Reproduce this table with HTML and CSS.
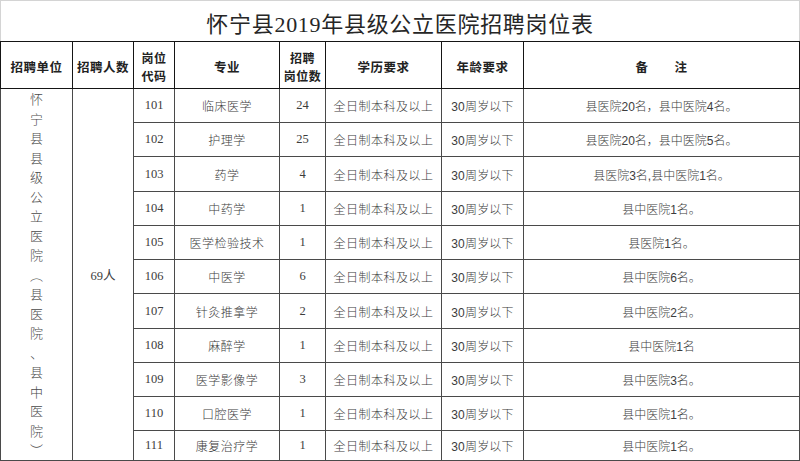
FILE: index.html
```html
<!DOCTYPE html>
<html lang="zh-CN">
<head>
<meta charset="utf-8">
<title>怀宁县2019年县级公立医院招聘岗位表</title>
<link rel="stylesheet" href="styles.css">
</head>
<body>
<div class="sheet">
  <div class="title">怀宁县2019年县级公立医院招聘岗位表</div>
  <table class="grid">
    <colgroup>
      <col class="c-unit"><col class="c-count"><col class="c-code"><col class="c-major"><col class="c-posts"><col class="c-edu"><col class="c-age"><col class="c-note">
    </colgroup>
    <thead>
      <tr class="head">
        <th>招聘单位</th><th>招聘人数</th><th class="two"><span>岗位</span><span>代码</span></th><th>专业</th><th class="two"><span>招聘</span><span>岗位数</span></th><th>学历要求</th><th>年龄要求</th><th>备&emsp;&emsp;注</th>
      </tr>
    </thead>
    <tbody>
      <tr class="row">
        <td rowspan="11" class="unit"><div class="vert">怀宁县县级公立医院︵县医院、县中医院︶</div></td>
        <td rowspan="11" class="count">69人</td>
        <td class="num">101</td><td class="cn">临床医学</td><td class="num">24</td><td class="cn">全日制本科及以上</td><td class="age">30周岁以下</td><td class="note">县医院20名，县中医院4名。</td>
      </tr>
      <tr class="row"><td class="num">102</td><td class="cn">护理学</td><td class="num">25</td><td class="cn">全日制本科及以上</td><td class="age">30周岁以下</td><td class="note">县医院20名，县中医院5名。</td></tr>
      <tr class="row"><td class="num">103</td><td class="cn">药学</td><td class="num">4</td><td class="cn">全日制本科及以上</td><td class="age">30周岁以下</td><td class="note">县医院3名,县中医院1名。</td></tr>
      <tr class="row"><td class="num">104</td><td class="cn">中药学</td><td class="num">1</td><td class="cn">全日制本科及以上</td><td class="age">30周岁以下</td><td class="note">县中医院1名。</td></tr>
      <tr class="row"><td class="num">105</td><td class="cn">医学检验技术</td><td class="num">1</td><td class="cn">全日制本科及以上</td><td class="age">30周岁以下</td><td class="note">县医院1名。</td></tr>
      <tr class="row"><td class="num">106</td><td class="cn">中医学</td><td class="num">6</td><td class="cn">全日制本科及以上</td><td class="age">30周岁以下</td><td class="note">县中医院6名。</td></tr>
      <tr class="row"><td class="num">107</td><td class="cn">针灸推拿学</td><td class="num">2</td><td class="cn">全日制本科及以上</td><td class="age">30周岁以下</td><td class="note">县中医院2名。</td></tr>
      <tr class="row"><td class="num">108</td><td class="cn">麻醉学</td><td class="num">1</td><td class="cn">全日制本科及以上</td><td class="age">30周岁以下</td><td class="note">县中医院1名</td></tr>
      <tr class="row"><td class="num">109</td><td class="cn">医学影像学</td><td class="num">3</td><td class="cn">全日制本科及以上</td><td class="age">30周岁以下</td><td class="note">县中医院3名。</td></tr>
      <tr class="row"><td class="num">110</td><td class="cn">口腔医学</td><td class="num">1</td><td class="cn">全日制本科及以上</td><td class="age">30周岁以下</td><td class="note">县中医院1名。</td></tr>
      <tr class="row last"><td class="num">111</td><td class="cn">康复治疗学</td><td class="num">1</td><td class="cn">全日制本科及以上</td><td class="age">30周岁以下</td><td class="note">县中医院1名。</td></tr>
    </tbody>
  </table>
</div>
</body>
</html>
```

FILE: styles.css
```css
html, body {
  margin: 0;
  padding: 0;
  background: #ffffff;
}

.sheet {
  width: 800px;
  height: 461px;
  overflow: hidden;
  font-family: "Liberation Serif", "Noto Sans CJK SC", serif;
  color: #333;
}

.title {
  box-sizing: border-box;
  height: 41px;
  border: 1px solid #d4d4d4;
  border-bottom: none;
  display: flex;
  align-items: center;
  justify-content: center;
  font-size: 22px;
  letter-spacing: 0.7px;
  color: #262626;
  padding-top: 1px;
}

.grid {
  border-collapse: collapse;
  table-layout: fixed;
  width: 799px;
}

.c-unit { width: 72px; }
.c-count { width: 61px; }
.c-code { width: 41px; }
.c-major { width: 105px; }
.c-posts { width: 46px; }
.c-edu { width: 116px; }
.c-age { width: 82px; }
.c-note { width: 276px; }

.grid th,
.grid td {
  border: 1px solid #3a3a3a;
  padding: 0;
  text-align: center;
  vertical-align: middle;
}

.head {
  height: 47px;
}

.head th {
  border-color: #151515;
  font-family: "Noto Sans CJK SC", sans-serif;
  font-weight: 700;
  font-size: 12.5px;
  line-height: 15px;
  color: #222;
  letter-spacing: 0.5px;
  padding-top: 2px;
}

.head th.two {
  font-size: 12px;
  padding-top: 3px;
}

.two span {
  display: block;
  height: 17.5px;
  line-height: 17.5px;
}

.row {
  height: 34.2px;
}

.row.last {
  height: 29px;
}

.row td {
  border-color: #4a4a4a;
  color: #3c3c3c;
}

.unit,
.count {
  border-color: #2a2a2a;
}

.vert {
  width: 13px;
  margin: 0 auto;
  font-family: "Noto Sans CJK SC", sans-serif;
  font-size: 13px;
  line-height: 19.5px;
  line-break: anywhere;
  word-break: break-all;
  color: #4a4a4a;
  font-weight: 300;
}

.count {
  font-family: "Liberation Serif", "Noto Sans CJK SC", serif;
  font-size: 12.5px;
  color: #444;
}

.num {
  font-family: "Liberation Serif", serif;
  font-size: 12.5px;
}

.cn {
  font-family: "Noto Sans CJK SC", sans-serif;
  font-size: 12px;
  font-weight: 300;
  letter-spacing: 0.5px;
}

.age,
.note {
  font-family: "Liberation Sans", "Noto Sans CJK SC", sans-serif;
  font-size: 12px;
  font-weight: 300;
}

.age {
  letter-spacing: 0.2px;
}
```
